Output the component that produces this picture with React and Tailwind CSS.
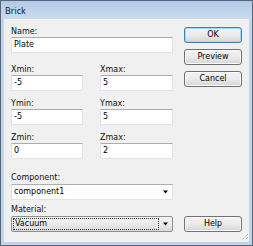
import React from "react";

function Label({ children, className = "" }) {
  return (
    <div className={"h-[10px] text-[8px] leading-[10px] text-[#111] whitespace-nowrap " + className}>
      {children}
    </div>
  );
}

function Input({ value }) {
  return (
    <div className="h-[16px] bg-white border border-[#e2e3ea] border-t-[#abadb3] flex items-center pl-[2px] text-[8px] leading-none text-black">
      {value}
    </div>
  );
}

function Arrow() {
  return (
    <svg width="6" height="4" viewBox="0 0 6 4" className="block">
      <path d="M0 0.5 H5 L2.5 3.5 Z" fill="#000" />
    </svg>
  );
}

function Button({ children, primary = false }) {
  return (
    <div
      className={
        "h-[16px] rounded-[3px] border flex items-center justify-center text-[8px] leading-none text-black bg-gradient-to-b from-[#f3f3f3] via-[#ebebeb] to-[#d6d6d6] " +
        (primary
          ? "border-[#3c7fb1] shadow-[inset_0_0_0_1px_#9fdcf8]"
          : "border-[#707070] shadow-[inset_0_0_0_1px_#fbfbfb]")
      }
    >
      {children}
    </div>
  );
}

export default function App() {
  return (
    <div className="w-[253px] h-[246px] flex flex-col bg-[#c0d4eb] border border-[#56657a] font-['DejaVu_Sans',sans-serif]">
      <div className="h-[19px] flex items-center pl-[4px] text-[9px] leading-none text-[#111] font-['Open_Sans',sans-serif] bg-gradient-to-b from-[#b2cae7] to-[#cbdbef]">
        Brick
      </div>
      <div className="flex-1 mx-[3px] mb-[3px] bg-[#f0f0f0] relative flex pt-[8px] px-[7px] pb-[9px] gap-[11px] border-b border-b-[#f0f0f0]">
        <div className="w-[162px] flex flex-col">
          <Label>Name:</Label>
          <Input value="Plate" />
          <div className="grid grid-cols-[72px_73px] gap-x-[17px] mt-[12px]">
            <div>
              <Label>Xmin:</Label>
              <Input value="-5" />
            </div>
            <div>
              <Label>Xmax:</Label>
              <Input value="5" />
            </div>
          </div>
          <div className="grid grid-cols-[72px_73px] gap-x-[17px] mt-[8px]">
            <div>
              <Label>Ymin:</Label>
              <Input value="-5" />
            </div>
            <div>
              <Label>Ymax:</Label>
              <Input value="5" />
            </div>
          </div>
          <div className="grid grid-cols-[72px_73px] gap-x-[17px] mt-[8px]">
            <div>
              <Label>Zmin:</Label>
              <Input value="0" />
            </div>
            <div>
              <Label>Zmax:</Label>
              <Input value="2" />
            </div>
          </div>
          <Label className="mt-[14px]">Component:</Label>
          <div className="mt-px h-[16px] bg-white border border-[#e2e3ea] border-t-[#abadb3] flex items-center pl-[2px] pr-[3px] text-[8px] leading-none text-black">
            <span className="flex-1">component1</span>
            <Arrow />
          </div>
          <Label className="mt-[5px]">Material:</Label>
          <div className="mt-px h-[16px] rounded-[2px] border border-[#8e8f8f] bg-gradient-to-b from-[#f2f2f2] via-[#ebebeb] to-[#d9d9d9] flex items-center pl-px pr-[3px] text-[8px] leading-none text-black">
            <div className="w-[146px] h-[12px] border border-dotted border-[#333] flex items-center pl-px">
              Vacuum
            </div>
            <div className="flex-1" />
            <Arrow />
          </div>
        </div>
        <div className="w-[58px] flex flex-col gap-[6px]">
          <Button primary>OK</Button>
          <Button>Preview</Button>
          <Button>Cancel</Button>
          <div className="mt-auto">
            <Button>Help</Button>
          </div>
        </div>
        <svg width="9" height="9" viewBox="0 0 9 9" className="absolute right-0 bottom-0">
          <path d="M8 2 L2 8 M8 5 L5 8 M8 8 L8 8" stroke="#a0a0a0" strokeWidth="1" strokeDasharray="1 1" />
          <path d="M9 3 L3 9 M9 6 L6 9" stroke="#ffffff" strokeWidth="1" strokeDasharray="1 1" />
        </svg>
      </div>
    </div>
  );
}
